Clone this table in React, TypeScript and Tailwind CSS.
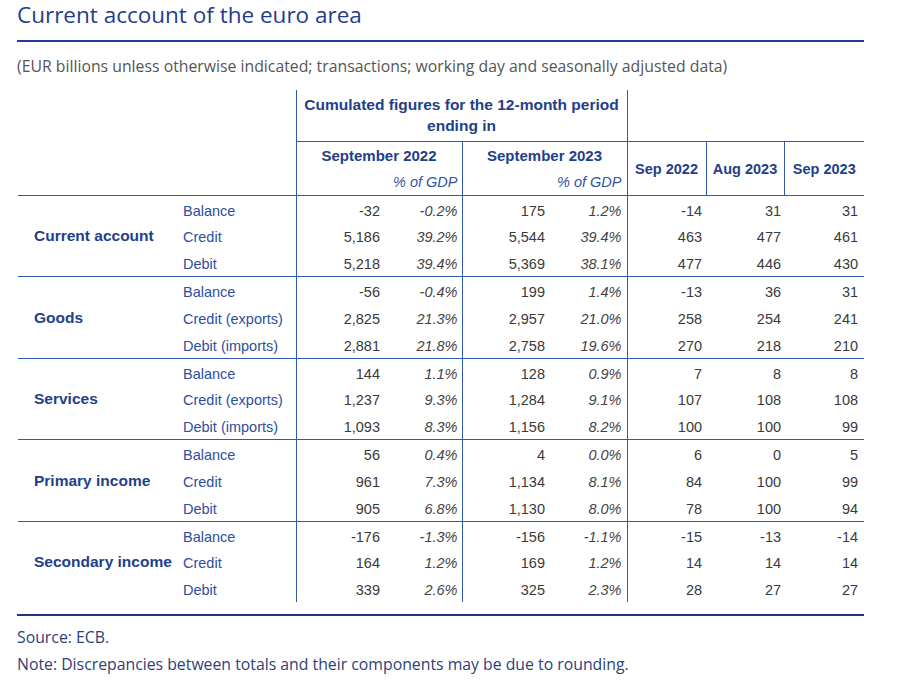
const groups = [
  {
    name: 'Current account',
    rows: [
      ['Balance', '-32', '-0.2%', '175', '1.2%', '-14', '31', '31'],
      ['Credit', '5,186', '39.2%', '5,544', '39.4%', '463', '477', '461'],
      ['Debit', '5,218', '39.4%', '5,369', '38.1%', '477', '446', '430'],
    ],
  },
  {
    name: 'Goods',
    rows: [
      ['Balance', '-56', '-0.4%', '199', '1.4%', '-13', '36', '31'],
      ['Credit (exports)', '2,825', '21.3%', '2,957', '21.0%', '258', '254', '241'],
      ['Debit (imports)', '2,881', '21.8%', '2,758', '19.6%', '270', '218', '210'],
    ],
  },
  {
    name: 'Services',
    rows: [
      ['Balance', '144', '1.1%', '128', '0.9%', '7', '8', '8'],
      ['Credit (exports)', '1,237', '9.3%', '1,284', '9.1%', '107', '108', '108'],
      ['Debit (imports)', '1,093', '8.3%', '1,156', '8.2%', '100', '100', '99'],
    ],
  },
  {
    name: 'Primary income',
    rows: [
      ['Balance', '56', '0.4%', '4', '0.0%', '6', '0', '5'],
      ['Credit', '961', '7.3%', '1,134', '8.1%', '84', '100', '99'],
      ['Debit', '905', '6.8%', '1,130', '8.0%', '78', '100', '94'],
    ],
  },
  {
    name: 'Secondary income',
    rows: [
      ['Balance', '-176', '-1.3%', '-156', '-1.1%', '-15', '-13', '-14'],
      ['Credit', '164', '1.2%', '169', '1.2%', '14', '14', '14'],
      ['Debit', '339', '2.6%', '325', '2.3%', '28', '27', '27'],
    ],
  },
]

const line = 'border-[#2f5aab]'

export default function App() {
  return (
    <div className="min-h-[687px] w-[900px] bg-white pl-[17px] font-['Open_Sans',sans-serif]">
      <div className="w-[847px]">
        {/* titre */}
        <h1 className="text-[22.5px] leading-[30px] text-[#1f3c8c]">Current account of the euro area</h1>
        <div className="mt-[10px] h-[2px] bg-[#1d3f8f]"></div>
        <p className="mt-[14px] text-[15.8px] leading-[20px] text-[#555]">
          (EUR billions unless otherwise indicated; transactions; working day and seasonally adjusted data)
        </p>

        <table className="mt-[14px] ml-[1px] w-[846px] table-fixed border-collapse font-['Liberation_Sans',Arial,sans-serif] text-[14.5px]">
          <colgroup>
            <col className="w-[157px]" />
            <col className="w-[121px]" />
            <col className="w-[89px]" />
            <col className="w-[77px]" />
            <col className="w-[88px]" />
            <col className="w-[77px]" />
            <col className="w-[79px]" />
            <col className="w-[78px]" />
            <col className="w-[80px]" />
          </colgroup>
          <thead>
            <tr className="h-[51px]">
              <th colSpan={2}></th>
              <th colSpan={4} className={`border-l border-r border-b ${line} pt-[4px] align-top text-center text-[15.5px] font-bold leading-[21px] text-[#22408a]`}>
                Cumulated figures for the 12-month period
                <br />
                ending in
              </th>
              <th colSpan={3} className={`border-b ${line}`}></th>
            </tr>
            <tr className={`h-[54px] border-b ${line}`}>
              <th colSpan={2}></th>
              <th colSpan={2} className={`border-l ${line} p-0 align-top`}>
                <div className="pt-[2px] text-center text-[15px] font-bold leading-[24px] text-[#22408a]">September 2022</div>
                <div className="pr-[4px] pt-[3px] text-right font-normal italic leading-[22px] text-[#2f55a4]">% of GDP</div>
              </th>
              <th colSpan={2} className={`border-l ${line} p-0 align-top`}>
                <div className="pt-[2px] text-center text-[15px] font-bold leading-[24px] text-[#22408a]">September 2023</div>
                <div className="pr-[5px] pt-[3px] text-right font-normal italic leading-[22px] text-[#2f55a4]">% of GDP</div>
              </th>
              <th className={`border-l ${line} pt-[3px] text-center font-bold text-[#22408a]`}>Sep 2022</th>
              <th className={`border-l ${line} pt-[3px] text-center font-bold text-[#22408a]`}>Aug 2023</th>
              <th className={`border-l ${line} pt-[3px] text-center font-bold text-[#22408a]`}>Sep 2023</th>
            </tr>
          </thead>
          <tbody>
            {groups.map((g) => (
              g.rows.map((r, i) => (
                <tr key={g.name + r[0]} className={`h-[27px] ${i === 0 ? `border-t ${line}` : ''}`}>
                  {i === 0 && (
                    <td rowSpan={3} className="pl-[16px] text-[15.5px] font-bold text-[#22408a]">{g.name}</td>
                  )}
                  <td className="pl-[8px] pt-[5px] text-[#2d4f9e]">{r[0]}</td>
                  <td className={`border-l ${line} pr-[5px] pt-[5px] text-right text-[#3a3a3a]`}>{r[1]}</td>
                  <td className="pr-[4px] pt-[5px] text-right italic text-[#444]">{r[2]}</td>
                  <td className={`border-l ${line} pr-[5px] pt-[5px] text-right text-[#3a3a3a]`}>{r[3]}</td>
                  <td className="pr-[5px] pt-[5px] text-right italic text-[#444]">{r[4]}</td>
                  <td className={`border-l ${line} pr-[4px] pt-[5px] text-right text-[#3a3a3a]`}>{r[5]}</td>
                  <td className="pr-[3px] pt-[5px] text-right text-[#3a3a3a]">{r[6]}</td>
                  <td className="pr-[6px] pt-[5px] text-right text-[#3a3a3a]">{r[7]}</td>
                </tr>
              ))
            ))}
          </tbody>
        </table>

        <div className="mt-[12px] h-[2px] bg-[#1b3a7d]"></div>
        <div className="mt-[8px] text-[15.8px] leading-[27px] text-[#2e4177]">
          <p>Source: ECB.</p>
          <p>Note: Discrepancies between totals and their components may be due to rounding.</p>
        </div>
      </div>
    </div>
  )
}
